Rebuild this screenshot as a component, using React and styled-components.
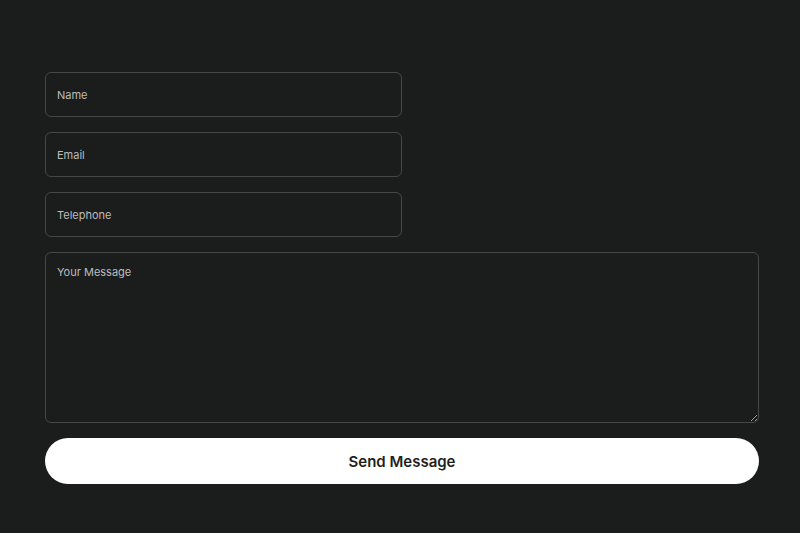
import React from 'react';
import styled, { createGlobalStyle } from 'styled-components';

const GlobalStyle = createGlobalStyle`
	html, body {
		margin: 0;
		padding: 0;
		background: #1b1c1c;
	}
	body {
		font-family: Inter, 'Liberation Sans', sans-serif;
	}
`;

const Page = styled.div`
	min-height: 533px;
	padding: 72px 41px 0 45px;
	box-sizing: border-box;
`;

const Form = styled.form`
	display: flex;
	flex-direction: column;
	gap: 15px;
	width: 714px;
`;

const Field = styled.input`
	box-sizing: border-box;
	width: 357px;
	height: 45px;
	padding: 0 11px;
	background: transparent;
	border: 1px solid #464747;
	border-radius: 6px;
	color: #e0e0e0;
	font-family: inherit;
	font-size: 11px;
	outline: none;

	&::placeholder {
		color: #bdbdbd;
	}
`;

const Message = styled.textarea`
	box-sizing: border-box;
	width: 714px;
	height: 171px;
	padding: 12px 11px;
	background: transparent;
	border: 1px solid #464747;
	border-radius: 6px;
	color: #e0e0e0;
	font-family: inherit;
	font-size: 11px;
	outline: none;
	resize: vertical;

	&::placeholder {
		color: #bdbdbd;
	}
`;

const SendButton = styled.button`
	height: 46px;
	width: 714px;
	border: none;
	border-radius: 23px;
	background: #ffffff;
	color: #1f1f1f;
	font-family: inherit;
	font-size: 15px;
	font-weight: 600;
	cursor: pointer;
`;

function App() {
	return (
		<>
			<GlobalStyle />
			<Page>
				<Form onSubmit={(e) => e.preventDefault()}>
					<Field type='text' placeholder='Name' />
					<Field type='email' placeholder='Email' />
					<Field type='tel' placeholder='Telephone' />
					<Message placeholder='Your Message' />
					<SendButton type='submit'>Send Message</SendButton>
				</Form>
			</Page>
		</>
	);
}

export default App;
